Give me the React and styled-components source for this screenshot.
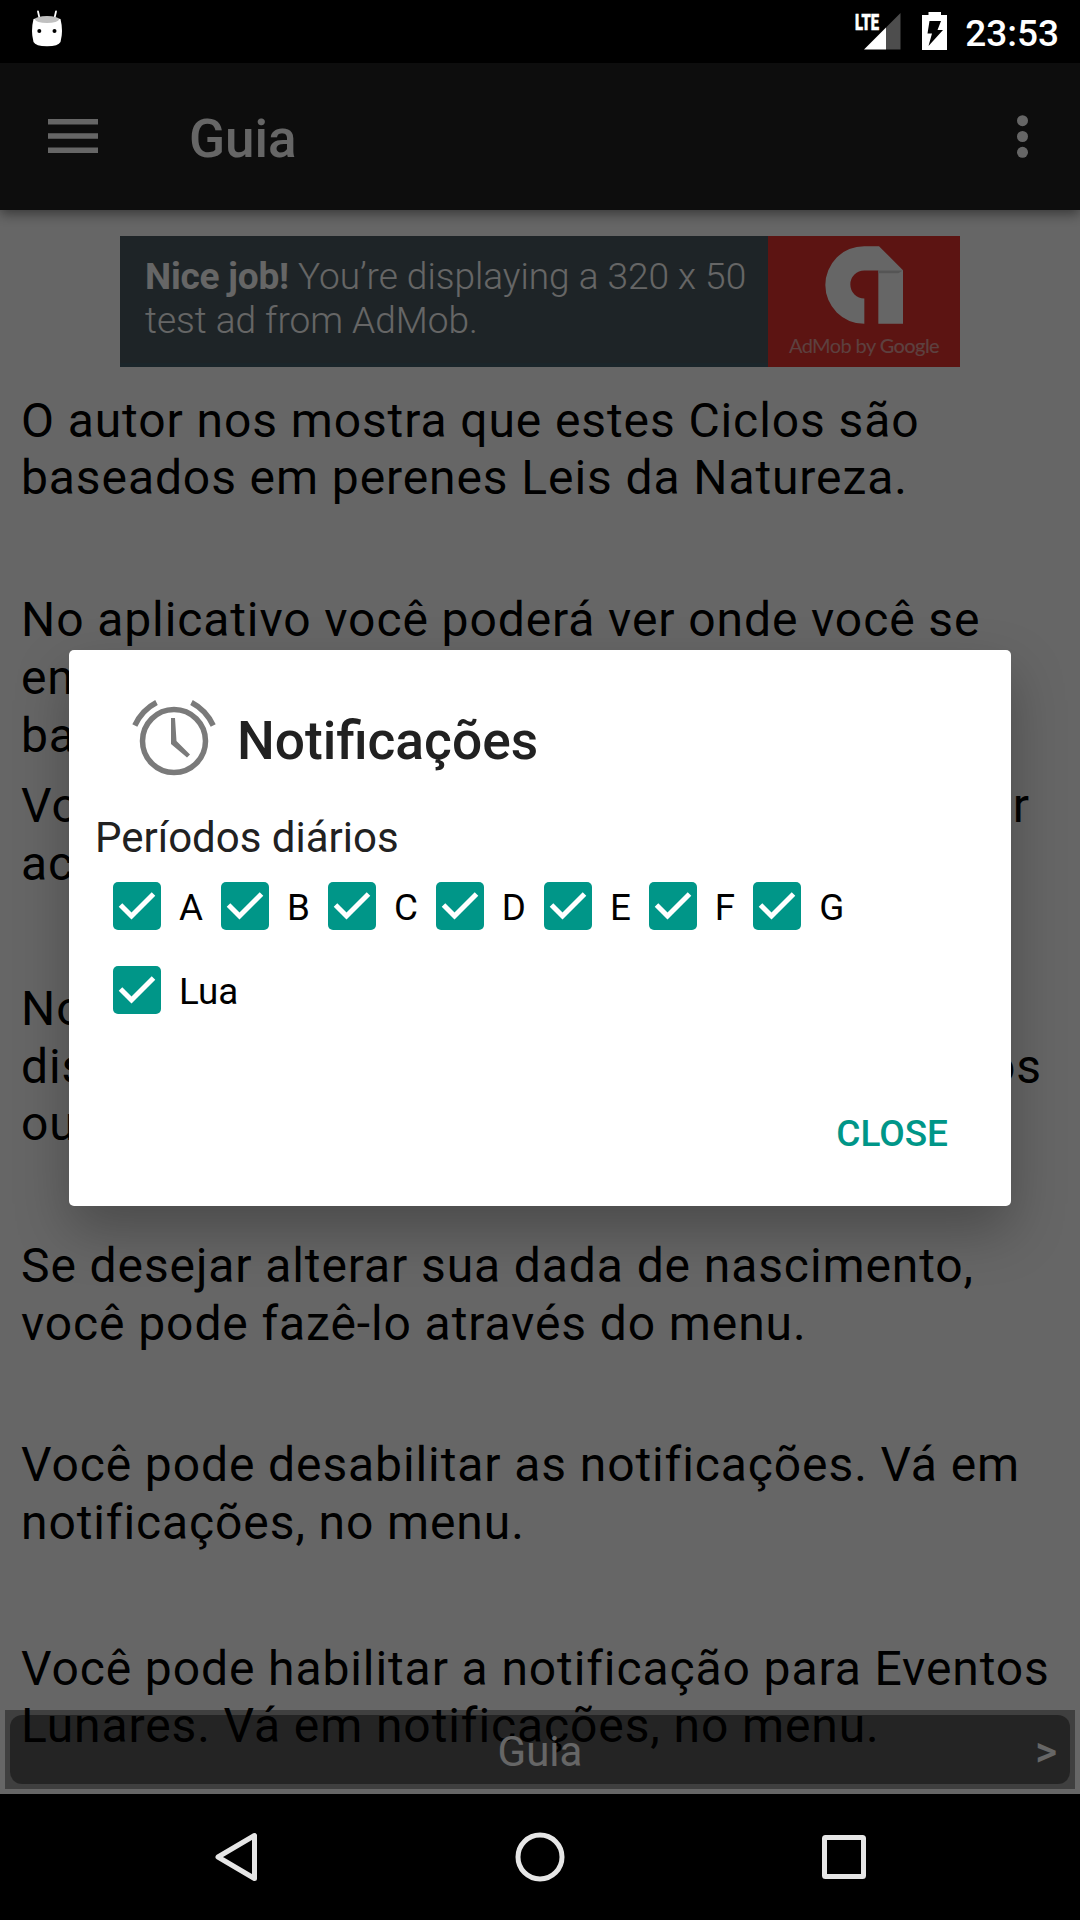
import React, { useState } from 'react';
import styled, { createGlobalStyle } from 'styled-components';

const paragraphs = [
	{ gap: 25, lead: 57, lines: [['O autor nos mostra que estes Ciclos são'], ['baseados em perenes Leis da Natureza.']] },
	{ gap: 85, lead: 58, lines: [['No aplicativo você poderá ver onde você se'], ['enc'], ['bas']] },
	{ gap: 12, lead: 57.5, lines: [['Vo', 'r', 1030], ['ac']] },
	{ gap: 88, lead: 57.5, lines: [['No'], ['dis', 'os', 1042], ['ou']] },
	{ gap: 84, lead: 58, lines: [['Se desejar alterar sua dada de nascimento,'], ['você pode fazê-lo através do menu.']] },
	{ gap: 83, lead: 58, lines: [['Você pode desabilitar as notificações. Vá em'], ['notificações, no menu.']] },
	{ gap: 88, lead: 57, lines: [['Você pode habilitar a notificação para Eventos'], ['Lunares. Vá em notificações, no menu.']] },
];

const periods = ['A', 'B', 'C', 'D', 'E', 'F', 'G'];

const DroidIcon = () => (
	<svg className='droidIcon' width='32' height='38' viewBox='0 0 32 38'>
		<path d='M7 2.500l1.600 7M25 2.500l-1.600 7' stroke='#fff' strokeWidth='1.8' strokeLinecap='round' />
		<path d='M2.500 10Q16 6 29.500 10Q32.500 22 29.500 33Q27.500 37.200 16 37.200Q4.500 37.200 2.500 33Q-.5 22 2.500 10z' fill='#fff' />
		<ellipse cx='16' cy='10.500' rx='12' ry='3.400' fill='#c0c0c0' />
		<circle cx='8.300' cy='22' r='2' />
		<circle cx='23.500' cy='22' r='2' />
	</svg>
);

const SignalIcon = () => (
	<svg className='signalIcon' width='46' height='38' viewBox='0 0 46 38'>
		<text
			x='0'
			y='17.500'
			fontSize='22.500'
			fontWeight='900'
			fill='#fff'
			stroke='#fff'
			strokeWidth='.6'
			textLength='24'
			lengthAdjust='spacingAndGlyphs'
		>
			LTE
		</text>
		<path d='M31 15.500L45.500 1v36.500H31z' fill='#4d4d4d' />
		<path d='M9 37.500L31 15.500v22z' fill='#fff' />
	</svg>
);

const BatteryIcon = () => (
	<svg width='25' height='38' viewBox='0 0 25 38'>
		<path d='M6.500 0H19v3h6v35H0V3h6.500z' fill='#fff' />
		<path d='M7.500 9H19l-3.500 9h5.500L6.500 34l3.500-12.500H5.500z' fill='#000' />
	</svg>
);

const MenuIcon = () => (
	<svg width='50' height='35' viewBox='0 0 50 35' fill='#fff'>
		<path d='M0 0h50v5.600H0zM0 14.200h50v5.600H0zM0 28.400h50v5.600H0z' />
	</svg>
);

const MoreIcon = () => (
	<svg width='12' height='43' viewBox='0 0 12 43' fill='#fff'>
		<circle cx='6.500' cy='5.700' r='5.500' />
		<circle cx='6.500' cy='21.500' r='5.500' />
		<circle cx='6.500' cy='37.300' r='5.500' />
	</svg>
);

const AdMobLogo = () => (
	<svg width='78' height='78' viewBox='195 60 234 233'>
		<path
			d='M313 293A117 116.500 0 0 1 313 60H357L429 132V293H355V133H313A42 42 0 0 0 313 217z'
			fill='#fff'
		/>
		<path d='M355 133h74l-14 8h-60z' fill='#d5d5d5' />
	</svg>
);

const AlarmIcon = () => (
	<svg width='84' height='76' viewBox='0 0 84 76' fill='none' stroke='#7a7a7a'>
		<circle cx='42' cy='41' r='31.500' strokeWidth='5.500' />
		<path d='M2.800 25.500Q10 10 24.500 2.500M81.200 25.500Q74 10 59.500 2.500' strokeWidth='5.500' />
		<path d='M39 18h4l1.500 23 13.500 13.500-3 3L39 44z' fill='#7a7a7a' stroke='none' />
	</svg>
);

const CheckIcon = () => (
	<svg width='48' height='48' viewBox='0 0 48 48'>
		<rect width='48' height='48' rx='5' fill='#009688' />
		<path d='M7.500 23L18.500 34L40.500 12' fill='none' stroke='#fff' strokeWidth='5' />
	</svg>
);

const Check = ({ label }) => {
	const [checked, setChecked] = useState(true);
	return (
		<CheckLabel>
			<input type='checkbox' checked={checked} onChange={() => setChecked(!checked)} />
			{checked ? <CheckIcon /> : <EmptyBox />}
			<span>{label}</span>
		</CheckLabel>
	);
};

const App = () => {
	return (
		<Screen>
			<GlobalStyle />
			<StatusBar>
				<DroidIcon />
				<StatusIcons>
					<SignalIcon />
					<BatteryIcon />
					<Clock>23:53</Clock>
				</StatusIcons>
			</StatusBar>
			<Window>
				<AppBar>
					<MenuIcon />
					<h1>Guia</h1>
					<MoreIcon />
				</AppBar>
				<Content>
					<Banner>
						<BannerText>
							<p><b>Nice job!</b> You’re displaying a 320 x 50</p>
							<p>test ad from AdMob.</p>
						</BannerText>
						<BannerBrand>
							<AdMobLogo />
							<span>AdMob by <b>Google</b></span>
						</BannerBrand>
					</Banner>
					{paragraphs.map(({ gap, lead, lines }, i) => (
						<Paragraph key={i} $gap={gap} $lead={lead}>
							{lines.map(([start, end, edge]) => (
								<Line key={start} $edge={edge}>
									<span>{start}</span>
									{end && <span>{end}</span>}
								</Line>
							))}
						</Paragraph>
					))}
					<Pager>
						<PagerInner>
							<span className='title'>Guia</span>
							<span className='next'>&gt;</span>
						</PagerInner>
					</Pager>
				</Content>
				<Scrim>
					<Dialog role='dialog'>
						<DialogHeader>
							<AlarmIcon />
							<h2>Notificações</h2>
						</DialogHeader>
						<Subtitle>Períodos diários</Subtitle>
						<CheckRow>
							{periods.map((period) => (
								<Check key={period} label={period} />
							))}
						</CheckRow>
						<CheckRow>
							<Check label='Lua' />
						</CheckRow>
						<CloseButton>CLOSE</CloseButton>
					</Dialog>
				</Scrim>
			</Window>
			<NavBar>
				<svg width='50' height='56' viewBox='0 0 50 56'>
					<path d='M43.500 6.500v43L7 28z' />
				</svg>
				<svg width='56' height='56' viewBox='0 0 56 56'>
					<circle cx='28' cy='28' r='22' />
				</svg>
				<svg width='50' height='56' viewBox='0 0 50 56'>
					<rect x='5.500' y='8.500' width='39' height='39' rx='1' />
				</svg>
			</NavBar>
		</Screen>
	);
};

const GlobalStyle = createGlobalStyle`
	* {
		box-sizing: border-box;
	}
	body {
		margin: 0;
		font-family: Roboto, 'Liberation Sans', sans-serif;
	}
	h1, h2, p {
		margin: 0;
	}
	svg {
		display: block;
		flex: none;
	}
`;

const Screen = styled.div`
	width: 1080px;
	height: 1920px;
	display: flex;
	flex-direction: column;
	background-color: #000;
	overflow: hidden;
`;

const StatusBar = styled.header`
	height: 63px;
	flex: none;
	display: flex;
	justify-content: space-between;
	align-items: center;
	padding: 0 21px 0 31px;
	background-color: #000;
	.droidIcon {
		margin-bottom: 7px;
	}
`;

const StatusIcons = styled.div`
	display: flex;
	align-items: center;
	svg {
		overflow: visible;
		margin-bottom: 1px;
	}
	.signalIcon {
		margin-right: 21px;
	}
`;

const Clock = styled.span`
	margin: 3px 0 0 18px;
	font-size: 37px;
	font-weight: 500;
	color: #fff;
`;

const Window = styled.div`
	position: relative;
	flex: 1;
	min-height: 0;
	display: flex;
	flex-direction: column;
	background-color: #fff;
`;

const AppBar = styled.div`
	height: 147px;
	flex: none;
	display: flex;
	align-items: center;
	padding: 0 52px 0 48px;
	background-color: #212121;
	box-shadow: 0 4px 12px rgba(0, 0, 0, .45);
	z-index: 1;
	h1 {
		flex: 1;
		margin: 4px 0 0 91px;
		font-size: 53px;
		font-weight: 500;
		color: #fff;
	}
`;

const Content = styled.main`
	position: relative;
	flex: 1;
	min-height: 0;
	padding-top: 26px;
`;

const Banner = styled.div`
	width: 840px;
	height: 131px;
	margin: 0 auto;
	display: flex;
	color: #fff;
`;

const BannerText = styled.div`
	width: 648px;
	padding: 19px 0 0 25px;
	background-color: #4b5a61;
	border-bottom: 4px solid #45606c;
	font-size: 37px;
	font-weight: 300;
	line-height: 44px;
	white-space: nowrap;
	b {
		font-weight: 700;
		letter-spacing: -.2px;
	}
`;

const BannerBrand = styled.div`
	flex: 1;
	display: flex;
	flex-direction: column;
	align-items: center;
	padding-top: 10px;
	background-color: #e6342f;
	font-family: Lato, sans-serif;
	font-size: 20px;
	line-height: 24px;
	letter-spacing: -.6px;
	color: #e8a09d;
	span {
		margin-top: 9px;
	}
	b {
		font-weight: 500;
	}
`;

const Paragraph = styled.section`
	margin-top: ${({ $gap }) => $gap}px;
	padding-left: 21px;
	font-size: 48px;
	line-height: ${({ $lead }) => $lead}px;
	letter-spacing: .9px;
	color: #000;
`;

const Line = styled.p`
	display: flex;
	justify-content: space-between;
	width: ${({ $edge }) => ($edge ? `${$edge - 21}px` : 'auto')};
	white-space: nowrap;
`;

const Pager = styled.div`
	position: absolute;
	left: 5px;
	right: 5px;
	bottom: 5px;
	height: 79px;
	padding: 5px;
	background-color: rgba(0, 0, 0, .385);
`;

const PagerInner = styled.div`
	height: 69px;
	display: grid;
	grid-template-columns: 1fr auto 1fr;
	align-items: center;
	padding: 0 13px;
	border-radius: 12px;
	background-color: rgba(0, 0, 0, .415);
	color: #fff;
	font-size: 42px;
	.title {
		grid-column: 2;
		margin-top: 3px;
	}
	.next {
		justify-self: end;
		margin-top: 3px;
		font-weight: 500;
	}
`;

const Scrim = styled.div`
	position: absolute;
	inset: 0;
	z-index: 2;
	display: flex;
	justify-content: center;
	align-items: center;
	padding-bottom: 1px;
	background-color: rgba(0, 0, 0, .6);
`;

const Dialog = styled.div`
	width: 942px;
	height: 556px;
	display: flex;
	flex-direction: column;
	border-radius: 5px;
	background-color: #fff;
	box-shadow: 0 24px 54px rgba(0, 0, 0, .27);
`;

const DialogHeader = styled.div`
	display: flex;
	align-items: center;
	height: 76px;
	margin: 50px 0 0 63px;
	h2 {
		margin: 5px 0 0 21px;
		font-size: 53.3px;
		font-weight: 500;
		color: #212121;
	}
`;

const Subtitle = styled.p`
	margin: 37px 0 0 26px;
	font-size: 42px;
	line-height: 50px;
	color: #212121;
`;

const CheckRow = styled.div`
	display: flex;
	height: 84px;
	padding-left: 44px;
	&:nth-of-type(2) {
		margin-top: 1px;
	}
`;

const CheckLabel = styled.label`
	display: flex;
	align-items: center;
	font-size: 36.75px;
	color: #000;
	cursor: pointer;
	input {
		display: none;
	}
	span {
		margin: 2px 18px 0;
	}
`;

const EmptyBox = styled.i`
	width: 48px;
	height: 48px;
	border: 5px solid #757575;
	border-radius: 5px;
`;

const CloseButton = styled.button`
	align-self: flex-end;
	margin: 80px 63px 0 0;
	padding: 0;
	border: 0;
	background: none;
	font-family: inherit;
	font-size: 37px;
	font-weight: 500;
	line-height: 44px;
	color: #009688;
	cursor: pointer;
`;

const NavBar = styled.nav`
	height: 126px;
	flex: none;
	display: flex;
	justify-content: space-between;
	align-items: center;
	padding: 0 211px;
	background-color: #000;
	svg {
		fill: none;
		stroke: #e6e6e6;
		stroke-width: 5px;
		stroke-linejoin: round;
	}
`;

export default App;
